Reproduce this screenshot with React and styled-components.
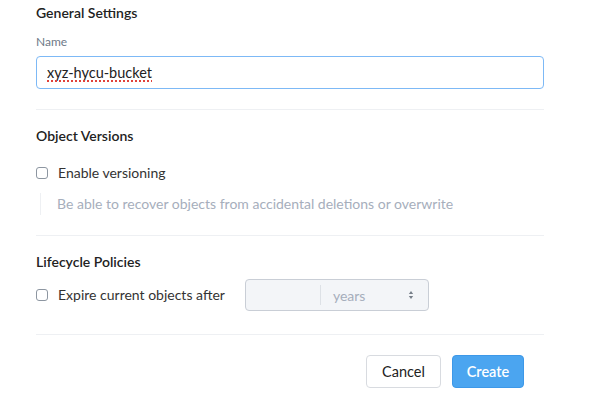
import React, { useState } from "react";
import styled, { createGlobalStyle } from "styled-components";

const GlobalStyle = createGlobalStyle`
  body {
    margin: 0;
    background: #ffffff;
    font-family: Lato, "Open Sans", Arial, sans-serif;
    color: #222;
  }
`;

function App() {
  const [name, setName] = useState("xyz-hycu-bucket");
  const [versioning, setVersioning] = useState(false);
  const [expire, setExpire] = useState(false);

  return (
    <Form>
      <GlobalStyle />
      <Section>
        <Title>General Settings</Title>
        <FieldLabel htmlFor="bucket_name">Name</FieldLabel>
        <InputWrap>
          <TextInput
            id="bucket_name"
            value={name}
            onChange={(e) => setName(e.target.value)}
          />
          {/* spell-check squiggle drawn over the value */}
          <Squiggle aria-hidden="true">{name}</Squiggle>
        </InputWrap>
      </Section>
      <Divider />
      <Section>
        <Title>Object Versions</Title>
        <CheckRow $top="19px">
          <Check
            type="checkbox"
            checked={versioning}
            onChange={() => setVersioning(!versioning)}
          />
          <span>Enable versioning</span>
        </CheckRow>
        <Help>Be able to recover objects from accidental deletions or overwrite</Help>
      </Section>
      <Divider />
      <Section $bottom="23px">
        <Title>Lifecycle Policies</Title>
        <PolicyRow>
          <CheckRow>
            <Check
              type="checkbox"
              checked={expire}
              onChange={() => setExpire(!expire)}
            />
            <span>Expire current objects after</span>
          </CheckRow>
          <Combo>
            <ComboNumber disabled />
            <ComboUnit>
              <span>years</span>
              <Arrows viewBox="0 0 6 10">
                <path d="M3 1 L5.2 4 H0.8 Z" fill="#777f8a" />
                <path d="M3 9 L5.2 6 H0.8 Z" fill="#777f8a" />
              </Arrows>
            </ComboUnit>
          </Combo>
        </PolicyRow>
      </Section>
      <Divider />
      <Footer>
        <Button>Cancel</Button>
        <Button $primary>Create</Button>
      </Footer>
    </Form>
  );
}

const Form = styled.div`
  width: 508px;
  margin-left: 36px;
  padding-top: 4px;
`;

const Section = styled.div`
  display: flex;
  flex-direction: column;
  padding: 0 0 ${(p) => p.$bottom || "20px"};
`;

const Title = styled.h4`
  margin: 0;
  font-size: 14px;
  line-height: 18px;
  font-weight: 600;
  color: #222;
`;

const FieldLabel = styled.label`
  margin-top: 12px;
  font-size: 12px;
  line-height: 16px;
  color: #6e7987;
`;

const InputWrap = styled.div`
  position: relative;
  margin-top: 6px;
`;

const TextInput = styled.input`
  box-sizing: border-box;
  display: block;
  height: 33px;
  width: 100%;
  padding: 0 10px;
  border: 1px solid #7db9f6;
  border-radius: 4px;
  font-family: inherit;
  font-size: 14.5px;
  color: #222;
  outline: none;
`;

const Squiggle = styled.span`
  position: absolute;
  left: 11px;
  top: 7px;
  font-size: 14.5px;
  line-height: 18px;
  color: transparent;
  text-decoration: underline dotted #e0413a;
  text-decoration-thickness: 2px;
  text-underline-offset: 3px;
  pointer-events: none;
  white-space: pre;
`;

const Divider = styled.hr`
  margin: 0 0 17px;
  border: none;
  border-top: 1px solid #eef0f3;
`;

const CheckRow = styled.label`
  display: flex;
  align-items: center;
  gap: 10px;
  margin-top: ${(p) => p.$top || "0"};
  font-size: 14px;
  line-height: 18px;
  color: #333;
  cursor: pointer;
`;

const Check = styled.input`
  appearance: none;
  margin: 0;
  width: 12px;
  height: 12px;
  border: 1px solid #8d96a1;
  border-radius: 3px;
  background: #fff;
  &:checked {
    background: #4ba5f0;
    border-color: #3d98e8;
  }
`;

const Help = styled.p`
  margin: 11px 0 0 4px;
  padding: 2px 0 2px 16px;
  border-left: 1px solid #eef0f3;
  font-size: 14px;
  line-height: 18px;
  color: #a6aebc;
`;

const PolicyRow = styled.div`
  display: flex;
  align-items: center;
  gap: 20px;
  margin-top: 8px;
`;

const Combo = styled.div`
  box-sizing: border-box;
  display: flex;
  align-items: center;
  width: 184px;
  height: 32px;
  border: 1px solid #c9ced6;
  border-radius: 4px;
  background: #f3f5f8;
`;

const ComboNumber = styled.input`
  box-sizing: border-box;
  width: 75px;
  height: 20px;
  border: none;
  border-right: 1px solid #dde1e6;
  background: transparent;
  outline: none;
`;

const ComboUnit = styled.div`
  flex: 1;
  display: flex;
  align-items: center;
  justify-content: space-between;
  padding: 0 14px 0 12px;
  font-size: 14px;
  color: #a6aebc;
`;

const Arrows = styled.svg`
  width: 6px;
  height: 10px;
`;

const Footer = styled.div`
  display: flex;
  justify-content: flex-end;
  gap: 11px;
  padding: 3px 20px 0 0;
`;

const Button = styled.button`
  box-sizing: border-box;
  height: 33px;
  width: ${(p) => (p.$primary ? "72px" : "75px")};
  padding: 0;
  border: 1px solid ${(p) => (p.$primary ? "#3d98e8" : "#d8dbe0")};
  border-radius: 4px;
  background: ${(p) => (p.$primary ? "#4ba5f0" : "#fff")};
  color: ${(p) => (p.$primary ? "#fff" : "#222")};
  font-family: inherit;
  font-size: 14.5px;
  font-weight: ${(p) => (p.$primary ? 600 : 400)};
  cursor: pointer;
`;

export default App;
